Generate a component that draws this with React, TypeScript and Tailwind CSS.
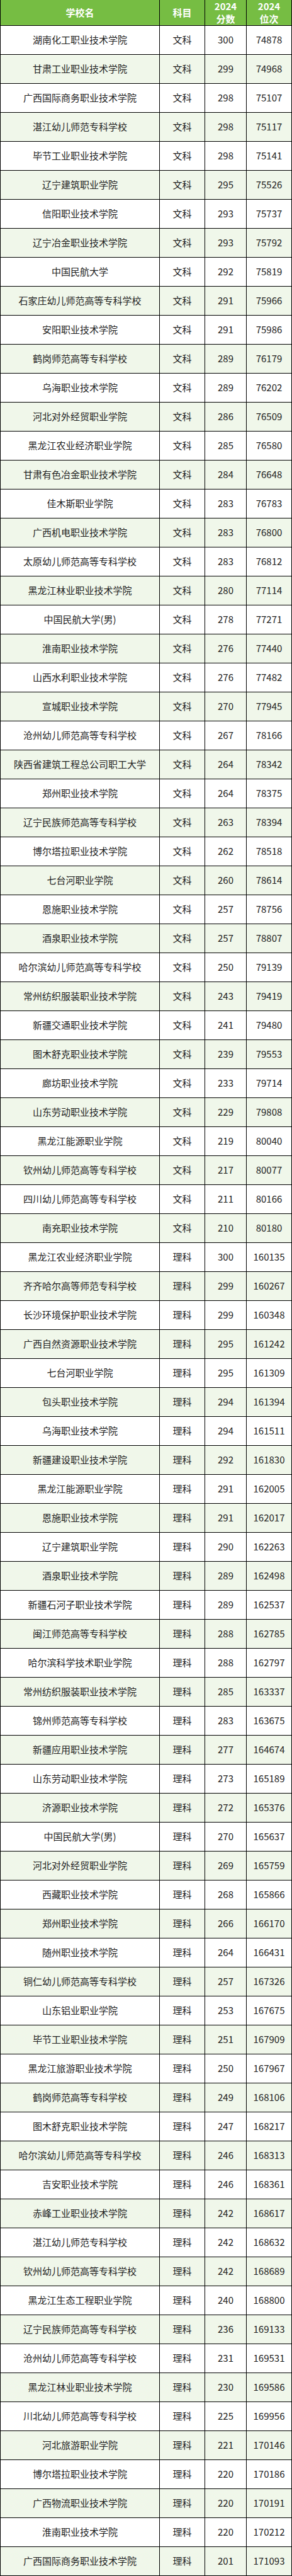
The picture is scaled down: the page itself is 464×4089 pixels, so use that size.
import React from "react";

type Row = [string, string, number, number];

const wen: [string, number, number][] = [
  ["湖南化工职业技术学院", 300, 74878],
  ["甘肃工业职业技术学院", 299, 74968],
  ["广西国际商务职业技术学院", 298, 75107],
  ["湛江幼儿师范专科学校", 298, 75117],
  ["毕节工业职业技术学院", 298, 75141],
  ["辽宁建筑职业学院", 295, 75526],
  ["信阳职业技术学院", 293, 75737],
  ["辽宁冶金职业技术学院", 293, 75792],
  ["中国民航大学", 292, 75819],
  ["石家庄幼儿师范高等专科学校", 291, 75966],
  ["安阳职业技术学院", 291, 75986],
  ["鹤岗师范高等专科学校", 289, 76179],
  ["乌海职业技术学院", 289, 76202],
  ["河北对外经贸职业学院", 286, 76509],
  ["黑龙江农业经济职业学院", 285, 76580],
  ["甘肃有色冶金职业技术学院", 284, 76648],
  ["佳木斯职业学院", 283, 76783],
  ["广西机电职业技术学院", 283, 76800],
  ["太原幼儿师范高等专科学校", 283, 76812],
  ["黑龙江林业职业技术学院", 280, 77114],
  ["中国民航大学(男)", 278, 77271],
  ["淮南职业技术学院", 276, 77440],
  ["山西水利职业技术学院", 276, 77482],
  ["宣城职业技术学院", 270, 77945],
  ["沧州幼儿师范高等专科学校", 267, 78166],
  ["陕西省建筑工程总公司职工大学", 264, 78342],
  ["郑州职业技术学院", 264, 78375],
  ["辽宁民族师范高等专科学校", 263, 78394],
  ["博尔塔拉职业技术学院", 262, 78518],
  ["七台河职业学院", 260, 78614],
  ["恩施职业技术学院", 257, 78756],
  ["酒泉职业技术学院", 257, 78807],
  ["哈尔滨幼儿师范高等专科学校", 250, 79139],
  ["常州纺织服装职业技术学院", 243, 79419],
  ["新疆交通职业技术学院", 241, 79480],
  ["图木舒克职业技术学院", 239, 79553],
  ["廊坊职业技术学院", 233, 79714],
  ["山东劳动职业技术学院", 229, 79808],
  ["黑龙江能源职业学院", 219, 80040],
  ["钦州幼儿师范高等专科学校", 217, 80077],
  ["四川幼儿师范高等专科学校", 211, 80166],
  ["南充职业技术学院", 210, 80180],
];

const li: [string, number, number][] = [
  ["黑龙江农业经济职业学院", 300, 160135],
  ["齐齐哈尔高等师范专科学校", 299, 160267],
  ["长沙环境保护职业技术学院", 299, 160348],
  ["广西自然资源职业技术学院", 295, 161242],
  ["七台河职业学院", 295, 161309],
  ["包头职业技术学院", 294, 161394],
  ["乌海职业技术学院", 294, 161511],
  ["新疆建设职业技术学院", 292, 161830],
  ["黑龙江能源职业学院", 291, 162005],
  ["恩施职业技术学院", 291, 162017],
  ["辽宁建筑职业学院", 290, 162263],
  ["酒泉职业技术学院", 289, 162498],
  ["新疆石河子职业技术学院", 289, 162537],
  ["闽江师范高等专科学校", 288, 162785],
  ["哈尔滨科学技术职业学院", 288, 162797],
  ["常州纺织服装职业技术学院", 285, 163337],
  ["锦州师范高等专科学校", 283, 163675],
  ["新疆应用职业技术学院", 277, 164674],
  ["山东劳动职业技术学院", 273, 165189],
  ["济源职业技术学院", 272, 165376],
  ["中国民航大学(男)", 270, 165637],
  ["河北对外经贸职业学院", 269, 165759],
  ["西藏职业技术学院", 268, 165866],
  ["郑州职业技术学院", 266, 166170],
  ["随州职业技术学院", 264, 166431],
  ["铜仁幼儿师范高等专科学校", 257, 167326],
  ["山东铝业职业学院", 253, 167675],
  ["毕节工业职业技术学院", 251, 167909],
  ["黑龙江旅游职业技术学院", 250, 167967],
  ["鹤岗师范高等专科学校", 249, 168106],
  ["图木舒克职业技术学院", 247, 168217],
  ["哈尔滨幼儿师范高等专科学校", 246, 168313],
  ["吉安职业技术学院", 246, 168361],
  ["赤峰工业职业技术学院", 242, 168617],
  ["湛江幼儿师范专科学校", 242, 168632],
  ["钦州幼儿师范高等专科学校", 242, 168689],
  ["黑龙江生态工程职业学院", 240, 168800],
  ["辽宁民族师范高等专科学校", 236, 169133],
  ["沧州幼儿师范高等专科学校", 231, 169531],
  ["黑龙江林业职业技术学院", 230, 169586],
  ["川北幼儿师范高等专科学校", 225, 169956],
  ["河北旅游职业学院", 221, 170146],
  ["博尔塔拉职业技术学院", 220, 170186],
  ["广西物流职业技术学院", 220, 170191],
  ["淮南职业技术学院", 220, 170212],
  ["广西国际商务职业技术学院", 201, 171093],
];

const rows: Row[] = [
  ...wen.map(([n, s, r]) => [n, "文科", s, r] as Row),
  ...li.map(([n, s, r]) => [n, "理科", s, r] as Row),
];

const font = {
  fontFamily: '"Noto Sans CJK SC", "Noto Sans", sans-serif',
};

export default function App() {
  return (
    <div className="w-[464px] bg-white" style={font}>
      <div className="grid grid-cols-[253px_72px_66px_72px] h-[41px] bg-[#76bd43] border-l border-b border-black text-white font-bold text-[15px] leading-[20px]">
        <div className="border-r border-black flex items-center justify-center">学校名</div>
        <div className="border-r border-black flex items-center justify-center">科目</div>
        <div className="border-r border-black flex flex-col items-center justify-center">
          <span>2024</span>
          <span>分数</span>
        </div>
        <div className="border-r border-black flex flex-col items-center justify-center">
          <span>2024</span>
          <span>位次</span>
        </div>
      </div>
      {rows.map(([name, subj, score, rank], i) => (
        <div
          key={i}
          className={
            "grid grid-cols-[253px_72px_66px_72px] h-[46px] border-l border-b border-black text-[15px] text-[#222] " +
            (i % 2 === 1 ? "bg-[#f0f7ea]" : "bg-white")
          }
        >
          <div className="border-r border-black flex items-center justify-center whitespace-nowrap">{name}</div>
          <div className="border-r border-black flex items-center justify-center">{subj}</div>
          <div className="border-r border-black flex items-center justify-center">{score}</div>
          <div className="border-r border-black flex items-center justify-center">{rank}</div>
        </div>
      ))}
    </div>
  );
}
